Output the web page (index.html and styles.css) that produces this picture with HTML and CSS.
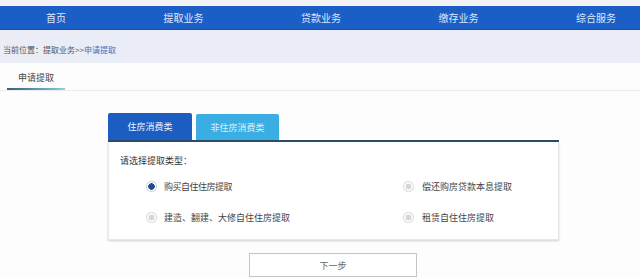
FILE: index.html
```html
<!DOCTYPE html>
<html lang="zh-CN">
<head>
<meta charset="utf-8">
<title>申请提取</title>
<link rel="stylesheet" href="styles.css">
</head>
<body>
<div class="topstrip"></div>
<nav class="nav">
  <a class="nav-item">首页</a>
  <a class="nav-item">提取业务</a>
  <a class="nav-item">贷款业务</a>
  <a class="nav-item">缴存业务</a>
  <a class="nav-item">综合服务</a>
</nav>
<div class="crumb">当前位置：提取业务&gt;&gt;<span class="crumb-cur">申请提取</span></div>
<div class="pagetabs">
  <div class="pagetab">
    <div class="pagetab-text">申请提取</div>
    <div class="pagetab-bar"></div>
  </div>
</div>
<section class="card">
  <div class="cardtabs">
    <div class="cardtab cardtab-active">住房消费类</div>
    <div class="cardtab cardtab-other">非住房消费类</div>
  </div>
  <div class="cardbody">
    <div class="prompt">请选择提取类型：</div>
    <div class="options">
      <label class="opt"><span class="radio radio-on"></span><span class="opt-text opt-tight">购买自住住房提取</span></label>
      <label class="opt"><span class="radio"></span><span class="opt-text">偿还购房贷款本息提取</span></label>
      <label class="opt"><span class="radio"></span><span class="opt-text">建造、翻建、大修自住住房提取</span></label>
      <label class="opt"><span class="radio"></span><span class="opt-text">租赁自住住房提取</span></label>
    </div>
  </div>
</section>
<div class="actions"><button class="next">下一步</button></div>
</body>
</html>
```
FILE: styles.css
```css
* { box-sizing: border-box; }
html, body { margin: 0; padding: 0; }
body {
  width: 640px;
  height: 278px;
  overflow: hidden;
  background: #fdfdfe;
  font-family: "Noto Sans CJK SC", "Noto Sans", sans-serif;
  color: #444;
}
.topstrip { height: 6px; background: #f2f2f4; }
.nav {
  height: 24px;
  background: #1b5ec6;
  border-bottom: 1px solid #1650a8;
  display: flex;
  justify-content: space-between;
  align-items: center;
  padding: 0 24px 0 46px;
}
.nav-item {
  color: #dfe9fc;
  font-size: 10px;
  line-height: 12px;
}
.crumb {
  height: 33px;
  background: #eaecf6;
  padding: 15px 0 0 3px;
  font-size: 8px;
  line-height: 10px;
  color: #555;
}
.crumb-cur { color: #3d6fc3; }
.pagetabs {
  height: 28px;
  border-bottom: 1px solid #ececee;
  display: flex;
}
.pagetab {
  margin-left: 7px;
  width: 58px;
  padding-top: 9px;
  display: flex;
  flex-direction: column;
}
.pagetab-text {
  font-size: 9px;
  line-height: 12px;
  padding-left: 11px;
  color: #444;
}
.pagetab-bar {
  margin-top: 4px;
  height: 3px;
  background: linear-gradient(90deg, #3b5d7c, #6fb9c8 80%, #8fd3d8);
}
.card {
  margin: 22px 0 0 108px;
  width: 451px;
}
.cardtabs {
  display: flex;
  align-items: flex-end;
  gap: 4px;
  border-bottom: 2px solid #2c4c6d;
}
.cardtab {
  width: 84px;
  font-size: 9px;
  display: flex;
  align-items: center;
  justify-content: center;
  border-radius: 2px 2px 0 0;
}
.cardtab-active {
  height: 27px;
  background: #1c5dc2;
  color: #eef4ff;
}
.cardtab-other {
  width: 83px;
  height: 26px;
  background: #3aaee2;
  color: #d8f2ff;
}
.cardbody {
  height: 98px;
  border: 1px solid #e6e7ea;
  border-top: 0;
  box-shadow: 0 1px 2px rgba(0, 0, 0, 0.18);
  background: #fff;
  padding: 14px 0 0 11px;
}
.prompt {
  font-size: 9px;
  line-height: 10px;
  color: #333;
}
.options {
  margin-top: 5px;
  padding-left: 26px;
  display: grid;
  grid-template-columns: 257px 1fr;
  grid-auto-rows: 31px;
}
.opt {
  display: flex;
  align-items: center;
  font-size: 9px;
  color: #444;
}
.opt-tight { letter-spacing: -0.5px; }
.radio {
  width: 11px;
  height: 11px;
  border-radius: 50%;
  border: 1px solid #d8dbe0;
  background: radial-gradient(circle, #d6d6d6 0 2.6px, #fbfbfb 3.2px);
  box-shadow: 0 0 1px rgba(0, 0, 0, 0.12);
  margin-right: 7px;
  flex: none;
}
.radio-on {
  border-color: #c9d3e2;
  background: radial-gradient(circle, #1d4e92 0 3px, #fff 3.6px);
}
.opt:nth-child(even) .radio { margin-right: 8px; }
.actions {
  margin: 13px 0 0 249px;
}
.next {
  display: block;
  width: 168px;
  height: 24px;
  border: 1px solid #c2c4c8;
  background: #fff;
  color: #666;
  font-family: inherit;
  font-size: 9px;
  padding: 0;
}
```
